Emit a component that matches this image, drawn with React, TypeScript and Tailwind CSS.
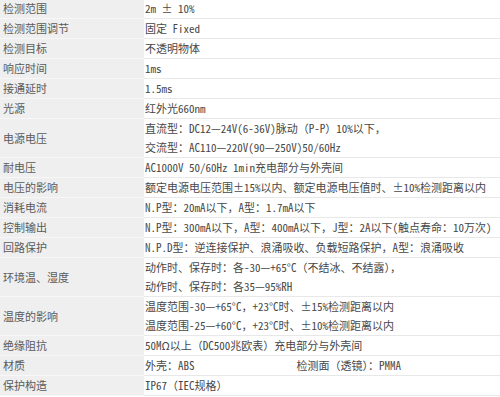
// Spec sheet table for a photoelectric sensor: label column on grey, values on white.

type Spec = {
  label: string
  lines: React.ReactNode[]
}

const specs: Spec[] = [
  { label: '检测范围', lines: ['2m ± 10%'] },
  { label: '检测范围调节', lines: ['固定 Fixed'] },
  { label: '检测目标', lines: ['不透明物体'] },
  { label: '响应时间', lines: ['1ms'] },
  { label: '接通延时', lines: ['1.5ms'] },
  { label: '光源', lines: ['红外光660nm'] },
  {
    label: '电源电压',
    lines: ['直流型：DC12—24V(6-36V)脉动（P-P）10%以下，', '交流型：AC110—220V(90—250V)50/60Hz'],
  },
  { label: '耐电压', lines: ['AC1000V 50/60Hz 1min充电部分与外壳间'] },
  { label: '电压的影响', lines: ['额定电源电压范围±15%以内、额定电源电压值时、±10%检测距离以内'] },
  { label: '消耗电流', lines: ['N.P型：20mA以下，A型：1.7mA以下'] },
  { label: '控制输出', lines: ['N.P型：300mA以下，A型：400mA以下，J型：2A以下(触点寿命：10万次)'] },
  { label: '回路保护', lines: ['N.P.D型：逆连接保护、浪涌吸收、负载短路保护，A型：浪涌吸收'] },
  {
    label: '环境温、湿度',
    lines: ['动作时、保存时：各-30—+65°C（不结冰、不结露），', '动作时、保存时：各35—95%RH'],
  },
  {
    label: '温度的影响',
    lines: ['温度范围-30—+65°C，+23°C时、±15%检测距离以内', '温度范围-25—+60°C，+23°C时、±10%检测距离以内'],
  },
  { label: '绝缘阻抗', lines: ['50MΩ以上（DC500兆欧表）充电部分与外壳间'] },
  {
    label: '材质',
    lines: [
      <>
        外壳：ABS<span className="ml-[102px]">检测面（透镜）：PMMA</span>
      </>,
    ],
  },
  { label: '保护构造', lines: ['IP67（IEC规格）'] },
]

export default function App() {
  return (
    <div className="w-[500px] h-[397px] overflow-hidden bg-white">
      <div className="-mt-px grid grid-cols-[144px_1fr]">
        {specs.map(spec => (
          <div key={spec.label} className="contents">
            <div className="flex items-center bg-[#efefef] border-b border-[#f7f7f7] px-[3px] text-[11px] text-[#5a5a5a] font-['Noto_Sans_CJK_SC',sans-serif]">
              {spec.label}
            </div>
            <div className="flex flex-col border-b border-[#e8e8e8] pl-[1px] text-[11px] text-[#474747] font-['Noto_Sans_Mono_CJK_SC','Noto_Sans_CJK_SC',monospace]">
              {spec.lines.map((line, i) => (
                <div key={i} className="h-[19px] leading-[19px] whitespace-nowrap">
                  {line}
                </div>
              ))}
            </div>
          </div>
        ))}
      </div>
    </div>
  )
}
